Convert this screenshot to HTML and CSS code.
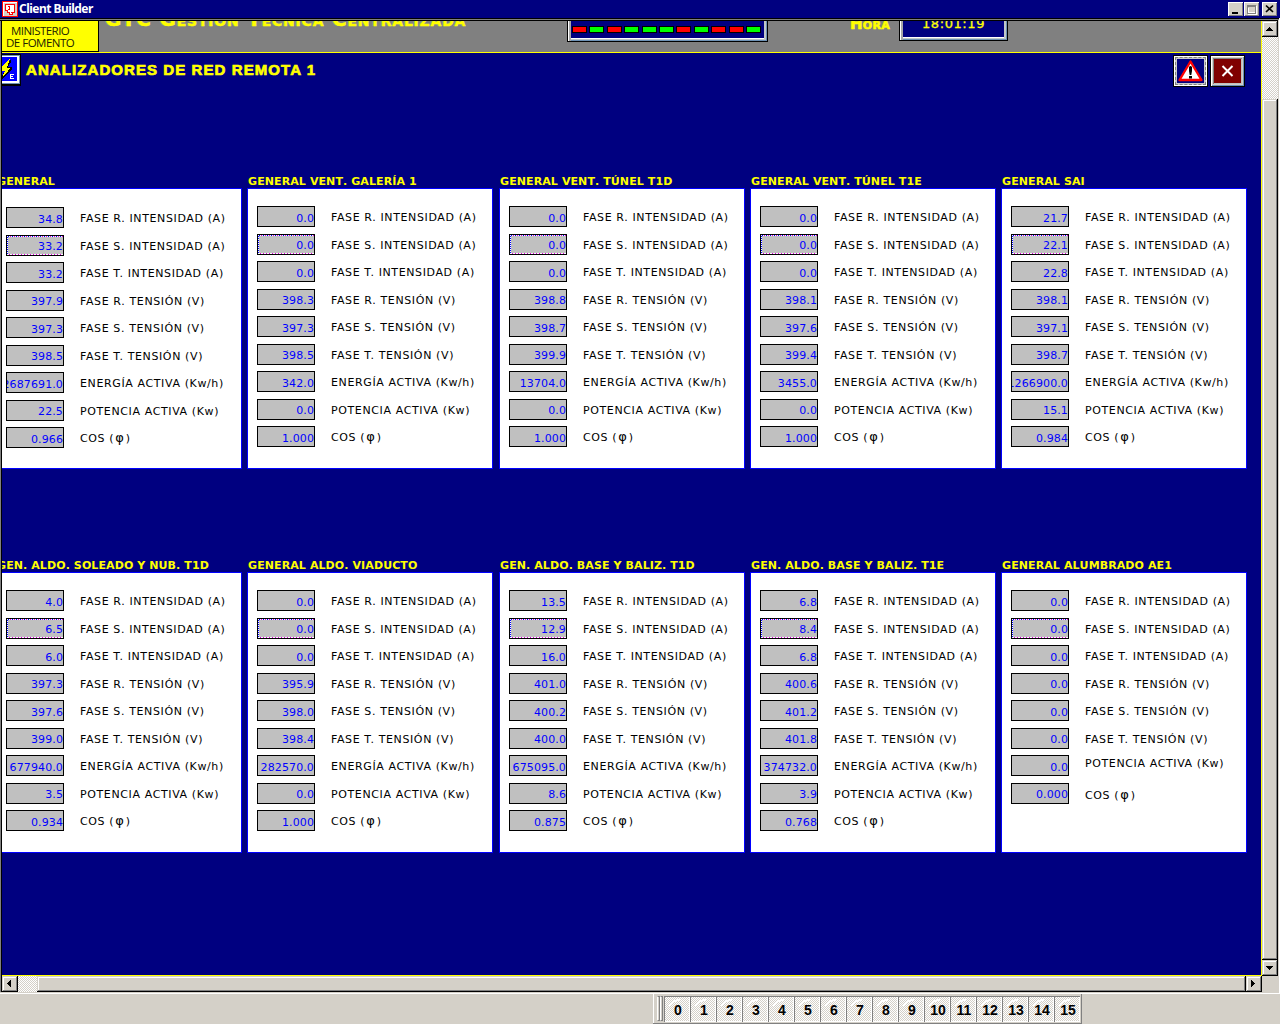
FILE: index.html
```html
<!DOCTYPE html>
<html lang="es">
<head>
<meta charset="utf-8">
<title>Client Builder</title>
<link rel="stylesheet" href="styles.css">
</head>
<body>
<div class="window">
  <header class="titlebar">
    <svg class="app-icon" width="16" height="16" viewBox="0 0 16 16" shape-rendering="crispEdges"><rect width="16" height="16" fill="#d4d0c8"/><path d="M.5.5h15v15H.5z" fill="none" stroke="#f00"/><path d="M1.500 14.500V1.500H14.500" fill="none" stroke="#fff"/><path d="M5.500 3.500h7v8h-2v2h-3v-2h-2v-2h-2v-6h2zM5.500 5.500h2v3h-2M9.500 11.500v-1" fill="#fff" stroke="#f00"/></svg>
    <span class="app-name">Client Builder</span>
    <div class="win-buttons">
      <span class="win-btn"><svg width="15" height="14" shape-rendering="crispEdges"><path d="M4 10h6v2H4z"/></svg></span>
      <span class="win-btn"><svg width="15" height="14" shape-rendering="crispEdges"><path d="M3.500 3.500h8v8h-8zM3.500 4.500h8" fill="none" stroke="#808080"/><path d="M12.500 4v8.500H4M4.500 5.500v5h6" fill="none" stroke="#fff"/></svg></span>
      <span class="win-btn win-close"><svg width="15" height="14" viewBox="0 0 15 14"><path d="M4 3.500l7 6.500M11 3.500L4 10" stroke="#000" stroke-width="1.700"/></svg></span>
    </div>
  </header>

  <div class="frame">
    <main class="screen">
      <section class="banner">
        <div class="ministry"><span class="ministry-a">MINISTERIO</span><span class="ministry-b">DE FOMENTO</span></div>
        <div class="system-name">GTC Gestión Técnica Centralizada</div>
        <div class="leds">
          <i class="led red"></i><i class="led"></i><i class="led red"></i><i class="led"></i><i class="led"></i><i class="led"></i><i class="led red"></i><i class="led"></i><i class="led red"></i><i class="led red"></i><i class="led"></i>
        </div>
        <div class="hour-label">Hora</div>
        <div class="clock">18:01:19</div>
      </section>
      <section class="heading">
        <svg class="energy" width="19" height="32" viewBox="0 0 19 32" shape-rendering="crispEdges"><rect width="19" height="32" fill="#000"/><path d="M0 1h18v29H0z" fill="#6d91b5"/><path d="M0 2h17v27H0z" fill="#fff"/><path d="M0 3h15v24H0z" fill="#00f"/><path d="M9 5v3L6 13h4v2L0 25v-3l3-5H0" fill="#000"/><path d="M8 5L0 12v5h3l-3 7 9-10.500H5z" fill="#ff0"/><path d="M8 20h4v1H9v1h2v1H9v1h3v1H8z" fill="#fff"/></svg>
        <h1>ANALIZADORES DE RED REMOTA 1</h1>
        <span class="tool alert"><svg width="27" height="25" viewBox="0 0 27 25"><path d="M13.500 3.500L2.500 22h22z" fill="#fff" stroke="#f00" stroke-width="2.300" stroke-linejoin="round"/><path d="M12 9q1.500-2 3 0v4l-.7 4h-1.600l-.7-4zM12 18h3v2.500h-3z"/></svg></span>
        <span class="tool exit"><svg width="27" height="23" viewBox="0 0 27 23"><path d="M8.500 6l10 10M18.500 6l-10 10" stroke="#fff" stroke-width="2"/></svg></span>
      </section>
      <section class="panels" id="panels"></section>
    </main>
    <div class="scroll vertical">
      <span class="scroll-btn"><svg width="16" height="16" shape-rendering="crispEdges"><path d="M7 6h1v1h1v1h1v1h1v1H4V9h1V8h1V7h1z"/></svg></span>
      <span class="thumb"></span>
      <span class="scroll-btn"><svg width="16" height="16" shape-rendering="crispEdges"><path d="M4 6h7v1h-1v1H9v1H8v1H7V9H6V8H5V7H4z"/></svg></span>
    </div>
    <div class="scroll horizontal">
      <span class="scroll-btn"><svg width="16" height="16" shape-rendering="crispEdges"><path d="M9 4v7H8v-1H7V9H6V8H5V7h1V6h1V5h1V4z"/></svg></span>
      <span class="thumb"></span>
      <span class="scroll-btn"><svg width="16" height="16" shape-rendering="crispEdges"><path d="M5 4v7h1v-1h1V9h1V8h1V7H8V6H7V5H6V4z"/></svg></span>
    </div>
    <div class="corner"></div>
  </div>

  <footer class="statusbar">
    <div class="toolbar" id="toolbar"><i class="grip"></i><i class="grip"></i></div>
  </footer>
</div>
<script src="panels.js"></script>
</body>
</html>
```
FILE: styles.css
```css
* { box-sizing: border-box; }
body {
  margin: 0;
  width: 1280px;
  height: 1024px;
  overflow: hidden;
  background: #d4d0c8;
  font-family: "DejaVu Sans", Verdana, sans-serif;
  font-size: 11px;
}
svg { display: block; flex: none; }
.window { display: flex; flex-direction: column; height: 1024px; }

/* Window title bar */
.titlebar {
  display: flex;
  height: 18px;
  padding: 1px 3px 0 2px;
  background: #000080;
  color: #fff;
}
.app-name {
  margin-left: 1px;
  font: bold 12px/16px "Noto Sans", sans-serif;
  letter-spacing: -0.53px;
  white-space: nowrap;
}
.win-buttons { display: flex; gap: 1px; margin: 1px 0 0 auto; }
.win-btn {
  width: 15px;
  height: 14px;
  background: #d4d0c8;
  box-shadow: inset 1px 1px #fff, inset -1px -1px #808080;
}
.win-close { margin-left: 2px; }

/* Scrolling view */
.frame {
  display: grid;
  grid-template-columns: 1260px 16px;
  grid-template-rows: 955px 16px;
  height: 976px;
  padding: 3px 0 0 2px;
  border-right: 1px solid #fff;
  background:
    linear-gradient(#000, #000) 0 0 / 100% 1px no-repeat,
    linear-gradient(#808080, #808080) 0 1px / 100% 1px no-repeat,
    linear-gradient(#000, #000) 0 2px / 1278px 1px no-repeat,
    linear-gradient(90deg, #808080 1px, #000 1px) 0 0 / 2px 974px no-repeat,
    linear-gradient(#fff, #fff) 0 975px / 100% 1px no-repeat,
    #d4d0c8;
}
.screen {
  overflow: hidden;
  background: #000080;
  border-right: 1px solid #ff0;
  border-bottom: 1px solid #ff0;
}
.banner {
  display: flex;
  height: 32px;
  overflow: hidden;
  background: #808080;
  border-bottom: 1px solid #ff0;
  color: #ff0;
  white-space: nowrap;
}
.ministry {
  display: flex;
  flex-direction: column;
  width: 97px;
  height: 31px;
  padding-top: 4px;
  background: #ff0;
  border-right: 1px solid #000;
  border-bottom: 1px solid #000;
  color: #222200;
  font: 11.5px/12px "Open Sans", sans-serif;
}
.ministry-a { padding-left: 9px; letter-spacing: -0.55px; }
.ministry-b { padding-left: 4px; letter-spacing: -0.5px; }
.system-name {
  width: 468px;
  margin-top: -14px;
  padding-left: 6px;
  font-size: 20px;
  font-weight: bold;
  font-variant: small-caps;
  line-height: 24px;
  letter-spacing: 0.79px;
  text-shadow: -1px 0 #7fa0b0;
  -webkit-text-stroke: 0.4px #ff0;
}
.leds, .clock {
  height: 31px;
  margin-top: -11px;
  background: #000080;
  border: 1px solid #000;
  box-shadow: inset 1px 0 #fff, inset 3px 0 #a8a8a8, inset 0 -1px #6d91b5, inset -1px 0 #6d91b5, inset -3px 0 #c0c8c8, inset 0 -2px #c0c8c8, inset 0 -3px #fff;
}
.leds { display: flex; gap: 2.4px; width: 201px; padding: 15px 4px; }
.led { width: 15px; height: 7px; flex: none; background: #0f0; border: 1px solid #000; }
.led.red { background: #f00; }
.hour-label {
  width: 131px;
  margin-top: -6px;
  padding-right: 9px;
  text-align: right;
  font-size: 15px;
  font-weight: 900;
  font-variant: small-caps;
  line-height: 18px;
  letter-spacing: 0.3px;
  -webkit-text-stroke: 0.6px #ff0;
}
.clock {
  width: 109px;
  padding-top: 5px;
  font-size: 13px;
  line-height: 16px;
  letter-spacing: 0.6px;
  text-align: center;
  -webkit-text-stroke: 0.3px #ff0;
}
.heading { display: flex; height: 117px; padding-top: 1px; }
.heading h1 {
  margin: 7px 0 0 5px;
  width: 1147px;
  color: #ff0;
  font: bold 15px/18px "Liberation Sans", Arial, sans-serif;
  letter-spacing: 1.08px;
  -webkit-text-stroke: 0.7px #ff0;
}
.tool { width: 35px; height: 32px; margin-top: 1px; border: 1px solid #000; }
.alert {
  padding: 2px 3px;
  margin-right: 2px;
  background: #000080;
  box-shadow: inset 0 0 0 1px #fff, inset 0 0 0 3px #c8c8c8;
  outline: 1px dashed #808080;
  outline-offset: -3px;
}
.exit {
  padding: 4px 3px;
  background: #800000;
  box-shadow: inset 1px 1px #fff, inset -1px -1px #6d91b5, inset 0 0 0 2px #d4d0c8, inset 3px 3px #808080, inset -3px -3px #c0c0c0;
}

/* Analyser panels */
.panels {
  display: grid;
  grid-template-columns: 251px 252px 251px 251px 246px;
  grid-template-rows: 384px 384px;
  width: 1251px;
  margin-left: -6px;
}
.panel { width: 246px; }
.panel h2 {
  height: 18px;
  margin: 0;
  padding: 5px 0 0 1px;
  color: #ff0;
  font-size: 11px;
  font-weight: bold;
  font-kerning: none;
  line-height: 13px;
  letter-spacing: 0.1px;
  white-space: nowrap;
}
.readings {
  display: grid;
  grid-template-rows: repeat(4, 28px 27px) 27px;
  height: 281px;
  padding: 17px 0 0 9px;
  background: #fff;
  border: 1px solid #00f;
}
.offset { padding-top: 18px; }
.reading { display: flex; gap: 16px; }
.value {
  display: flex;
  justify-content: flex-end;
  width: 58px;
  height: 21px;
  padding: 5px 0 0;
  overflow: hidden;
  background: #c0c0c0;
  border: 1px solid #000;
  color: #00f;
  line-height: 13px;
  letter-spacing: 0.12px;
}
.reading:nth-child(even) .value { padding-top: 4px; }
.reading:nth-child(2) .value {
  background:
    repeating-linear-gradient(90deg, #fff 0 1px, #00f 1px 2px, #fff 2px 3px, #d0d 3px 4px) 0 0 / 100% 1px no-repeat,
    repeating-linear-gradient(90deg, #fff 0 2px, #d0d 2px 3px) 0 100% / 100% 1px no-repeat,
    repeating-linear-gradient(#fff 0 1px, #00f 1px 2px) 0 0 / 1px 100% no-repeat,
    #c0c0c0;
}
.name {
  padding-top: 5px;
  color: #000;
  line-height: 13px;
  letter-spacing: 0.62px;
  white-space: nowrap;
}
.phi { font-size: 13px; line-height: 11px; letter-spacing: 2px; margin-left: 1px; }
.raised { padding-top: 2px; }
.lowered { padding-top: 6px; }

/* Scroll bars */
.scroll {
  display: flex;
  background: repeating-conic-gradient(#fff 0 25%, #d4d0c8 0 50%) 0 0 / 2px 2px;
}
.vertical { flex-direction: column; }
.vertical .thumb { height: 861px; margin-top: 62px; }
.horizontal .thumb { width: 1209px; margin-left: 19px; }
.scroll-btn { width: 16px; height: 16px; }
.scroll-btn, .thumb {
  flex: none;
  background: #d4d0c8;
  box-shadow: inset -1px -1px #000, inset 1px 1px #d4d0c8, inset -2px -2px #808080, inset 2px 2px #fff;
}
.corner { background: #d4d0c8; }

/* Status bar */
.statusbar { height: 30px; background: #d4d0c8; }
.toolbar {
  display: flex;
  width: 429px;
  height: 30px;
  margin-left: 653px;
  padding: 2px 0 0 4px;
  border-right: 1px solid #808080;
  border-bottom: 1px solid #808080;
  box-shadow: inset 1px 0 #fff;
}
.grip {
  width: 3px;
  height: 25px;
  border: 1px solid #808080;
  border-left-color: #fff;
}
.key {
  width: 26px;
  height: 26px;
  background:
    radial-gradient(circle at 16px 16px, transparent 11px, #fff 11px 13px, transparent 13px) 0 0 / 16px 10px no-repeat,
    repeating-conic-gradient(#fff 0 25%, #d4d0c8 0 50%) 0 0 / 2px 2px;
  box-shadow: inset 1px 1px #808080, inset -1px -1px #fff;
  font: bold 14px/28px "Liberation Sans", Arial, sans-serif;
  text-align: center;
  padding-left: 2px;
}
.grip + .key { margin-left: 1px; }
```
FILE: panels.js
```js
const names = [
  "FASE R. INTENSIDAD (A)", "FASE S. INTENSIDAD (A)", "FASE T. INTENSIDAD (A)",
  "FASE R. TENSIÓN (V)", "FASE S. TENSIÓN (V)", "FASE T. TENSIÓN (V)",
  "ENERGÍA ACTIVA (Kw/h)", "POTENCIA ACTIVA (Kw)", 'COS (<span class="phi">φ</span>)'
];
const panels = [
  ["GENERAL", "34.8 33.2 33.2 397.9 397.3 398.5 2687691.0 22.5 0.966"],
  ["GENERAL VENT. GALERÍA 1", "0.0 0.0 0.0 398.3 397.3 398.5 342.0 0.0 1.000"],
  ["GENERAL VENT. TÚNEL T1D", "0.0 0.0 0.0 398.8 398.7 399.9 13704.0 0.0 1.000"],
  ["GENERAL VENT. TÚNEL T1E", "0.0 0.0 0.0 398.1 397.6 399.4 3455.0 0.0 1.000"],
  ["GENERAL SAI", "21.7 22.1 22.8 398.1 397.1 398.7 1266900.0 15.1 0.984"],
  ["GEN. ALDO. SOLEADO Y NUB. T1D", "4.0 6.5 6.0 397.3 397.6 399.0 677940.0 3.5 0.934"],
  ["GENERAL ALDO. VIADUCTO", "0.0 0.0 0.0 395.9 398.0 398.4 282570.0 0.0 1.000"],
  ["GEN. ALDO. BASE Y BALIZ. T1D", "13.5 12.9 16.0 401.0 400.2 400.0 675095.0 8.6 0.875"],
  ["GEN. ALDO. BASE Y BALIZ. T1E", "6.8 8.4 6.8 400.6 401.2 401.8 374732.0 3.9 0.768"],
  ["GENERAL ALUMBRADO AE1", "0.0 0.0 0.0 0.0 0.0 0.0 0.0 0.000"]
];

document.getElementById("panels").innerHTML = panels.map(([title, data], p) => {
  const values = data.split(" ");
  // The lighting panel has no energy counter.
  const short = values.length === 8;
  const labels = short ? names.filter((_, i) => i !== 6) : names;
  const rows = values.map((value, i) => {
    const shift = short && i === 6 ? " raised" : short && i === 7 ? " lowered" : "";
    return `<div class="reading"><span class="value">${value}</span><span class="name${shift}">${labels[i]}</span></div>`;
  }).join("");
  return `<article class="panel"><h2>${title}</h2><div class="readings${p === 0 ? " offset" : ""}">${rows}</div></article>`;
}).join("");

document.getElementById("toolbar").insertAdjacentHTML("beforeend",
  Array.from({ length: 16 }, (_, i) => `<span class="key">${i}</span>`).join(""));
```
